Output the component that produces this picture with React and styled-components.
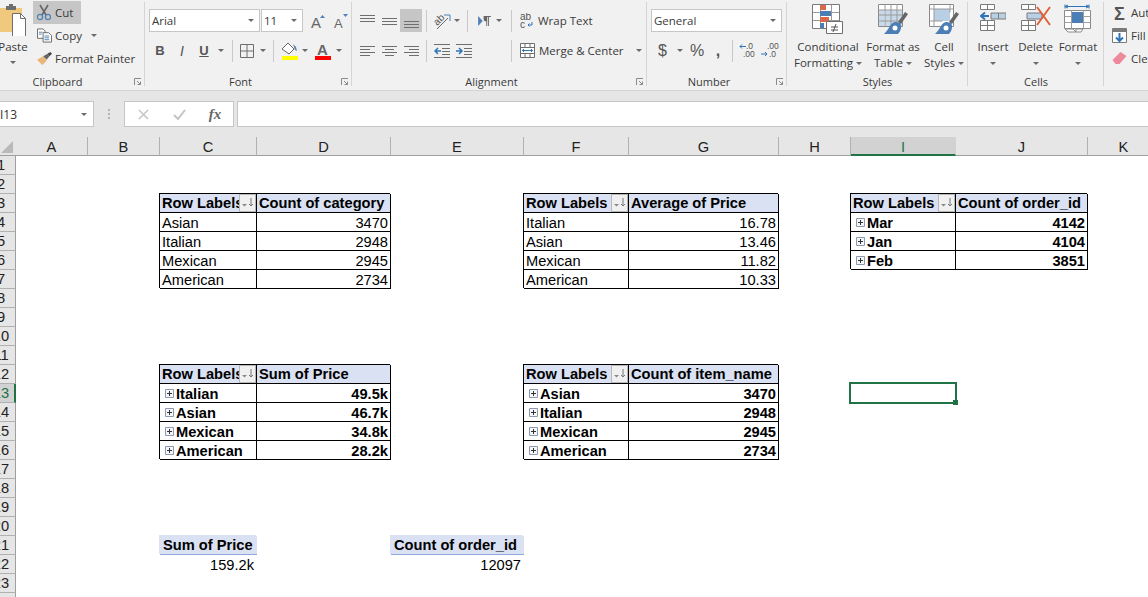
import React from 'react';
import styled, {createGlobalStyle} from 'styled-components';

const GlobalStyle = createGlobalStyle`
  html, body { margin: 0; padding: 0; height: 100%; overflow: hidden; background: #fff; }
  body { font-family: "Open Sans", "Noto Sans", sans-serif; color: #3a3a3a; }
  svg { flex: none; }
`;

const Page = styled.div`
  width: 1148px;
  height: 597px;
  overflow: hidden;
`;

/* ribbon */
const Ribbon = styled.div`
  display: flex;
  height: 90px;
  background: #f1f1f1;
  border-bottom: 1px solid #d4d4d4;
`;

const Group = styled.div`
  position: relative;
  flex: none;
  display: flex;
  flex-direction: column;
  width: ${p => p.$w}px;
  margin-left: ${p => p.$ml || 0}px;
  padding-left: ${p => p.$pl || 0}px;
  box-sizing: border-box;
  &::after {
    content: '';
    position: absolute;
    right: 0;
    top: 2px;
    bottom: 4px;
    width: 1px;
    background: #d5d5d5;
  }
`;

const GroupBody = styled.div`
  height: 72px;
  display: flex;
`;

const GroupLabel = styled.div`
  margin-left: ${p => -(p.$pl || 0)}px;
  padding-right: ${p => (p.$launcher ? 16 : 0)}px;
  height: 18px;
  line-height: 19px;
  font-size: 11px;
  text-align: center;
  color: #3a3a3a;
`;

const LauncherBox = styled.svg`
  position: absolute;
  right: 3px;
  bottom: 4px;
`;

const Launcher = () => (
  <LauncherBox width="8" height="8" viewBox="0 0 8 8" fill="none" stroke="#8a8a8a">
    <path d="M.5 7V.5H7M3 3l3.5 3.500M6.500 3.500v3h-3" />
  </LauncherBox>
);

const Stack = styled.div`
  display: flex;
  flex-direction: column;
  width: ${p => (p.$w ? `${p.$w}px` : 'auto')};
  padding-top: ${p => p.$pt || 0}px;
`;

const Row = styled.div`
  display: flex;
  align-items: center;
  height: ${p => p.$h || 23}px;
  margin-top: ${p => p.$mt || 0}px;
  margin-left: ${p => p.$ml || 0}px;
`;

const Tool = styled.div`
  flex: none;
  width: ${p => p.$w}px;
  height: 23px;
  display: flex;
  align-items: center;
  justify-content: center;
  background: ${p => (p.$on ? '#c6c6c6' : 'transparent')};
`;

const Caret = styled.span`
  flex: none;
  display: inline-block;
  width: 0;
  height: 0;
  margin: ${p => p.$m || '0'};
  border-left: 3.5px solid transparent;
  border-right: 3.5px solid transparent;
  border-top: 3.5px solid #6b6b6b;
`;

const CaretTool = styled.div`
  flex: none;
  width: ${p => p.$w || 12}px;
  display: flex;
  justify-content: center;
`;

const Sep = styled.div`
  flex: none;
  width: 1px;
  height: 22px;
  background: #c9c9c9;
  margin: 0 ${p => p.$r || 4}px 0 ${p => p.$l || 4}px;
`;

const Select = styled.div`
  flex: none;
  box-sizing: border-box;
  width: ${p => p.$w}px;
  height: 23px;
  margin-right: ${p => p.$mr || 0}px;
  background: #fff;
  border: 1px solid #c6c6c6;
  display: flex;
  align-items: center;
  justify-content: space-between;
  padding: 0 5px 0 2px;
  font-size: 11.5px;
`;

const SmallButton = styled.div`
  display: flex;
  align-items: center;
  gap: ${p => p.$gap || 5}px;
  height: ${p => p.$h || 22}px;
  width: ${p => (p.$w ? `${p.$w}px` : 'auto')};
  padding: 0 0 ${p => p.$pb || 0}px 4px;
  box-sizing: border-box;
  background: ${p => (p.$on ? '#c6c6c6' : 'transparent')};
  font-size: 11.5px;
  white-space: nowrap;
`;

const PasteLabel = styled.div`
  font-size: 11.5px;
  text-align: center;
  line-height: 16px;
  margin-top: 3px;
`;

const PasteCaret = styled.div`
  display: flex;
  justify-content: center;
  margin-top: 6px;
`;

const BigButton = styled.div`
  flex: none;
  width: ${p => p.$w}px;
  display: flex;
  flex-direction: column;
  align-items: center;
  padding-top: 4px;
  font-size: 11.5px;
  line-height: 16px;
  text-align: center;
  white-space: nowrap;
`;

const IconSlot = styled.div`
  height: 35px;
  display: flex;
  align-items: flex-start;
  justify-content: center;
`;

const BigText = styled.div`
  display: flex;
  align-items: center;
  justify-content: center;
  gap: 3px;
  height: 16px;
`;

const Letter = styled.span`
  font-family: "Liberation Sans", Arial, sans-serif;
  font-size: ${p => p.$size || 13}px;
  font-weight: ${p => (p.$bold ? 700 : 400)};
  font-style: ${p => (p.$italic ? 'italic' : 'normal')};
  text-decoration: ${p => (p.$under ? 'underline' : 'none')};
  color: #555;
`;

/* formula bar */
const FormulaBand = styled.div`
  display: flex;
  height: 26px;
  padding: 10px 0;
  background: #e6e6e6;
`;

const NameBox = styled.div`
  box-sizing: border-box;
  width: 94px;
  background: #fff;
  border: 1px solid #c6c6c6;
  border-left: 0;
  display: flex;
  align-items: center;
  justify-content: space-between;
  padding-right: 6px;
  font-size: 12px;
  color: #333;
`;

const Dots = styled.div`
  width: 30px;
  display: flex;
  flex-direction: column;
  align-items: center;
  justify-content: center;
  gap: 2px;
  & i { display: block; width: 2px; height: 2px; background: #b4b4b4; }
`;

const FxBox = styled.div`
  box-sizing: border-box;
  width: 110px;
  background: #fff;
  border: 1px solid #c6c6c6;
  display: flex;
  align-items: center;
`;

const FxSlot = styled.div`
  width: 36px;
  display: flex;
  justify-content: center;
  align-items: center;
`;

const FxText = styled.span`
  font-family: "Liberation Serif", serif;
  font-style: italic;
  font-weight: 700;
  font-size: 15px;
  color: #666;
`;

const FormulaInput = styled.div`
  flex: 1;
  margin-left: 3px;
  background: #fff;
  border: 1px solid #c6c6c6;
  border-right: 0;
`;

/* sheet */
const Sheet = styled.div`
  display: grid;
  grid-template-columns: 16px 72px 72px 97px 134px 133px 105px 150px 72px 105px 132px 72px;
  grid-template-rows: repeat(25, 19px);
  background: #fff;
  font-family: "Liberation Sans", Arial, sans-serif;
  font-size: 14.67px;
  color: #000;
`;

const Corner = styled.div`
  grid-column: 1;
  grid-row: 1;
  background: #e6e6e6;
  border-bottom: 1px solid #9f9f9f;
  position: relative;
  &::after {
    content: '';
    position: absolute;
    right: 3px;
    bottom: 2px;
    border-left: 12px solid transparent;
    border-bottom: 12px solid #b9b9b9;
  }
`;

const ColHead = styled.div`
  grid-row: 1;
  box-sizing: border-box;
  background: ${p => (p.$active ? '#d2d2d2' : '#e6e6e6')};
  color: ${p => (p.$active ? '#217346' : '#222')};
  border-right: 1px solid ${p => (p.$active ? '#d2d2d2' : '#b1b1b1')};
  border-bottom: ${p => (p.$active ? '2px solid #217346' : '1px solid #9f9f9f')};
  text-align: center;
  line-height: 20px;
`;

const RowHead = styled.div`
  grid-column: 1;
  box-sizing: border-box;
  overflow: hidden;
  background: ${p => (p.$active ? '#d2d2d2' : '#e6e6e6')};
  color: ${p => (p.$active ? '#217346' : '#222')};
  border-bottom: 1px solid #b1b1b1;
  border-right: ${p => (p.$active ? '2px solid #217346' : '1px solid #9f9f9f')};
  line-height: 18px;
`;

const RowNumber = styled.span`
  display: block;
  width: 34px;
  margin-left: -16px;
  text-align: center;
`;

const Cell = styled.div`
  box-sizing: border-box;
  grid-column: ${p => p.$col};
  grid-row: ${p => p.$row};
  overflow: hidden;
  white-space: nowrap;
  display: flex;
  align-items: center;
  justify-content: ${p => (p.$right ? 'flex-end' : 'flex-start')};
  padding: ${p => (p.$head ? 0 : 1)}px 2px 0 ${p => (p.$indent ? 5 : 2)}px;
  font-weight: ${p => (p.$bold ? 700 : 400)};
  background: ${p => (p.$head ? '#d9e1f2' : '#fff')};
  border-right: 1px solid #000;
  border-bottom: 1px solid #000;
  box-shadow: -1px -1px 0 0 #000;
  line-height: 18px;
`;

const HeadLabel = styled.span`
  flex: 1;
  min-width: 0;
  overflow: hidden;
`;

const FilterButton = styled.span`
  flex: none;
  box-sizing: border-box;
  width: 17px;
  height: 18px;
  margin-right: -2px;
  background: #f0f0f0;
  border: 1px solid #b8b8b8;
  display: flex;
  align-items: center;
  justify-content: center;
`;

const PlusBox = styled.svg`
  flex: none;
  margin-right: 2px;
`;

const PlainHead = styled.div`
  grid-column: ${p => p.$col};
  grid-row: ${p => p.$row};
  box-sizing: border-box;
  background: #d9e1f2;
  border-bottom: 1px solid #8ea9db;
  box-shadow: -1px -1px 0 0 #d9e1f2;
  font-weight: 700;
  padding-left: 3px;
  line-height: 18px;
  white-space: nowrap;
`;

const PlainValue = styled.div`
  grid-column: ${p => p.$col};
  grid-row: ${p => p.$row};
  text-align: right;
  padding: 1px 3px 0 0;
  line-height: 18px;
`;

const Selected = styled.div`
  grid-column: ${p => p.$col};
  grid-row: ${p => p.$row};
  position: relative;
  &::before {
    content: '';
    position: absolute;
    left: -2px;
    top: -2px;
    right: -1px;
    bottom: -1px;
    border: 2px solid #217346;
  }
  &::after {
    content: '';
    position: absolute;
    right: -2px;
    bottom: -2px;
    width: 5px;
    height: 5px;
    background: #217346;
  }
`;

/* icons */
const PasteIcon = () => (
  <svg width="30" height="32" viewBox="0 0 30 32">
    <path d="M0 4h24v24H0z" fill="#f0c97e" />
    <path d="M8 2h3V0h4v2h3v4H8z" fill="#6e6e6e" />
    <path d="M14.500 9.500h8l5 5v18h-13z" fill="#fff" stroke="#6e6e6e" />
    <path d="M22.500 9.500v5h5" fill="none" stroke="#6e6e6e" />
  </svg>
);

const ScissorsIcon = () => (
  <svg width="14" height="17" viewBox="0 0 14 17" fill="none">
    <path d="M3 1l6 10M11 1L5 11" stroke="#666" strokeWidth="1.600" />
    <circle cx="3" cy="13" r="2.600" stroke="#4f81b5" strokeWidth="1.300" />
    <circle cx="11" cy="13" r="2.600" stroke="#4f81b5" strokeWidth="1.300" />
  </svg>
);

const CopyIcon = () => (
  <svg width="15" height="15" viewBox="0 0 16 15" fill="#fff" stroke="#666">
    <path d="M.5.500h6l2 2v8h-8z" />
    <path d="M6.500 4.500h6l3 3v7h-9z" />
    <path d="M2 4h4M2 6h3M8 8h5M8 10h5M8 12h5" stroke="#4f81b5" fill="none" />
  </svg>
);

const PainterIcon = () => (
  <svg width="15" height="15" viewBox="0 0 17 15">
    <path d="M0 9l7-4 4 5-5 5z" fill="#eab676" />
    <path d="M7 5l5-3 2 3-3 4z" fill="#666" />
    <path d="M12 2l3-2 2 2-3 3z" fill="#444" />
  </svg>
);

const GrowA = ({up}) => (
  <svg width="17" height="16" viewBox="0 0 17 16">
    <path d={up ? 'M10 5l2.500-3 2.500 3z' : 'M10 1h5l-2.500 3z'} fill="#4f81b5" />
    <text x="1" y="15" fontFamily="Liberation Sans" fontSize={up ? 15 : 13} fill="#666">A</text>
  </svg>
);

const BordersIcon = () => (
  <svg width="14" height="14" viewBox="0 0 14 14" fill="none" stroke="#6e6e6e">
    <path d="M.5.500h13v13H.5zM7 .500v13M.5 7h13" />
  </svg>
);

const FillIcon = () => (
  <svg width="17" height="18" viewBox="0 0 17 18">
    <path d="M1 7l6-6 6 6-5 5z" fill="#fff" stroke="#666" />
    <path d="M12 2l3 3 1 4-2-1z" fill="#4f81b5" />
    <path d="M1 14h16v4H1z" fill="#ffff00" />
  </svg>
);

const FontColorIcon = () => (
  <svg width="17" height="18" viewBox="0 0 17 18">
    <text x="8.500" y="13" textAnchor="middle" fontFamily="Liberation Sans" fontWeight="700" fontSize="15" fill="#666">A</text>
    <path d="M1 14h16v4H1z" fill="#ff0000" />
  </svg>
);

const Lines = ({rows, w = 15, h = 14}) => (
  <svg width={w} height={h} viewBox={`0 0 ${w} ${h}`} stroke="#6e6e6e" fill="none">
    {rows.map(([a, b, y]) => <path key={y} d={`M${a} ${y}.5H${b}`} />)}
  </svg>
);

const OrientIcon = () => (
  <svg width="20" height="18" viewBox="0 0 20 18" fill="none">
    <text x="2" y="12" transform="rotate(-45 6 9)" fontFamily="Liberation Sans" fontSize="10" fill="#555">ab</text>
    <path d="M5 17L16 6" stroke="#666" />
    <path d="M12 3h6v6" stroke="#4f81b5" />
  </svg>
);

const DirIcon = () => (
  <svg width="13" height="10" viewBox="0 0 14 11">
    <path d="M0 0l5 5.500L0 11z" fill="#4f81b5" />
    <path d="M6 0h8v1h-2v10h-1V1h-1v10H9V6a3 3 0 0 1-3-3z" fill="#666" />
  </svg>
);

const IndentIcon = ({flip}) => (
  <svg width="16" height="14" viewBox="0 0 16 14" fill="none">
    <path d={flip ? 'M0 7h5M3 4l3 3-3 3' : 'M7 7H1M4 4L1 7l3 3'} stroke="#2f75b5" strokeWidth="1.500" />
    <path d="M0 .500h16M8 4.500h8M8 7.500h8M8 10.500h8M0 13.500h16" stroke="#6e6e6e" />
  </svg>
);

const WrapIcon = () => (
  <svg width="14" height="16" viewBox="0 0 14 16">
    <text x="0" y="7" fontFamily="Liberation Sans" fontSize="10" fill="#555">ab</text>
    <text x="0" y="15" fontFamily="Liberation Sans" fontSize="10" fill="#555">c</text>
    <path d="M12 9v3H8M9.500 10.500L8 12l1.500 1.500" fill="none" stroke="#2f75b5" />
  </svg>
);

const MergeIcon = () => (
  <svg width="15" height="15" viewBox="0 0 15 15" fill="#fff" stroke="#6e6e6e">
    <path d="M.5.500h14v14H.5z" />
    <path d="M.5 4.500h14M.5 10.500h14M5 .500v4M10 .500v4M5 10.500v4M10 10.500v4" fill="none" />
    <path d="M2 7.500h11M4 6L2.500 7.500 4 9M11 6l1.500 1.500L11 9" stroke="#2f75b5" fill="none" />
  </svg>
);

const DecimalIcon = ({more}) => (
  <svg width="18" height="15" viewBox="0 0 18 15">
    <text x={more ? 7 : 6} y="6" fontFamily="Liberation Sans" fontSize="8.500" fill="#555">{more ? '.0' : '.00'}</text>
    <text x={more ? 4 : 8} y="14" fontFamily="Liberation Sans" fontSize="8.500" fill="#555">{more ? '.00' : '.0'}</text>
    <path d={more ? 'M7 3.500H1M3 1.500l-2 2 2 2' : 'M0 11h6M4 9l2 2-2 2'} fill="none" stroke="#2f75b5" />
  </svg>
);

const CondIcon = () => (
  <svg width="32" height="32" viewBox="0 0 32 32">
    <path d="M.5.500h27v24H.5z" fill="#fff" stroke="#7a7a7a" />
    <path d="M8.500 1v24M19.500 1v24M1 8.500h26M1 16.500h26" stroke="#9a9a9a" fill="none" />
    <path d="M8 1h6v5H8z" fill="#d9694a" />
    <path d="M8 7h11v5H8z" fill="#4a7eb5" />
    <path d="M8 13h9v5H8z" fill="#d9694a" />
    <path d="M8 19h4v5H8z" fill="#4a7eb5" />
    <path d="M14.500 17.500h16v12h-16z" fill="#fff" stroke="#6e6e6e" />
    <path d="M19 23h7M19 26h7M24 20l-3 8" stroke="#555" fill="none" />
  </svg>
);

const TableBrushIcon = ({cell}) => (
  <svg width="30" height="32" viewBox="0 0 30 32">
    <path d="M.5.500h24v22H.5z" fill="#fff" stroke="#8a8a8a" />
    {cell
      ? <path d="M5 5h16v12H5z" fill="#b8cfe6" />
      : <path d="M7 6h17v16H7zM1 6h5v16H1z" fill="#c8d9eb" />}
    <path d={cell ? 'M5 .500v22M21 .500v8M.5 5h24M.5 17h13' : 'M7 .500v22M13 .500v22M19 .500v22M.5 6h24M.5 11h24M.5 17h24'} stroke="#9a9a9a" fill="none" />
    <path d="M20 18l7-10 3 2-7 10z" fill="#666" />
    <path d="M18 18c-6 0-7 8-12 12h14c3-3 4-8 2-11z" fill="#4a7eb5" />
    <circle cx="17" cy="24" r="2.500" fill="#fff" />
  </svg>
);

const InsertIcon = () => (
  <svg width="26" height="28" viewBox="0 0 26 28">
    <path d="M.5.500h14v5H.5zM7.500.500v5M.5 16.500h14v10H.5zM.5 21.500h14M7.500 16.500v10" fill="#fff" stroke="#7a7a7a" />
    <path d="M11 9h15v6H11z" fill="#b8cfe6" stroke="#7a7a7a" />
    <path d="M18.500 9v6" stroke="#7a7a7a" />
    <path d="M1 12h8M5 8.500L1 12l4 3.500" fill="none" stroke="#2f75b5" strokeWidth="2" />
  </svg>
);

const DeleteIcon = () => (
  <svg width="30" height="28" viewBox="0 0 30 28">
    <path d="M.5.500h14v5H.5zM7.500.500v5M.5 16.500h14v10H.5zM.5 21.500h14M7.500 16.500v10" fill="#fff" stroke="#7a7a7a" />
    <path d="M6 9h15v6H6z" fill="#b8cfe6" stroke="#7a7a7a" />
    <path d="M16 3l13 18M29 3L16 21" stroke="#e0623c" strokeWidth="2" fill="none" />
  </svg>
);

const FormatIcon = () => (
  <svg width="28" height="30" viewBox="0 0 28 30">
    <path d="M1 2.500h24M1 .500v4M25 .500v4M4 1L1 2.500 4 4M22 1l3 1.500L22 4" stroke="#2f75b5" fill="none" />
    <path d="M.5 6.500h26v18H.5z" fill="#fff" stroke="#8a8a8a" />
    <path d="M7.500 6.500v18M19.500 6.500v18M.5 12.500h26M.5 18.500h26" stroke="#a0a0a0" fill="none" />
    <path d="M8 8h11v11H8z" fill="#4a7eb5" />
    <path d="M1 25h8l3 3h-8zM12 25h7l-2 3h-5z" fill="#fff" stroke="#8a8a8a" />
  </svg>
);

const SigmaIcon = () => (
  <svg width="15" height="15" viewBox="0 0 15 15">
    <text x="7.500" y="14.500" textAnchor="middle" fontFamily="Liberation Sans" fontWeight="700" fontSize="18" fill="#555">Σ</text>
  </svg>
);

const FillDownIcon = () => (
  <svg width="15" height="15" viewBox="0 0 15 15">
    <path d="M.5.500h14v14H.5z" fill="#fff" stroke="#7a7a7a" />
    <path d="M1 1h13v3H1z" fill="#7a7a7a" />
    <path d="M7.500 5v8M4 9.500l3.500 3.500L11 9.500" fill="none" stroke="#2f75b5" strokeWidth="2" />
  </svg>
);

const EraserIcon = () => (
  <svg width="15" height="13" viewBox="0 0 14 13"><path d="M0 8l8-8 6 4-7 8H3z" fill="#ec8a9b" /></svg>
);

const CrossIcon = () => (
  <svg width="11" height="11" viewBox="0 0 11 11"><path d="M1 1l9 9M10 1l-9 9" stroke="#c4c4c4" strokeWidth="1.500" /></svg>
);

const CheckIcon = () => (
  <svg width="13" height="11" viewBox="0 0 13 11"><path d="M1 6l4 4 7-9" fill="none" stroke="#c4c4c4" strokeWidth="2" /></svg>
);

const FilterGlyph = () => (
  <svg width="12" height="10" viewBox="0 0 12 10" fill="none">
    <path d="M0 6h5l-2.500 2.500z" fill="#888" />
    <path d="M9 0v8M7 6l2 2 2-2" stroke="#777" />
  </svg>
);

const Plus = () => (
  <PlusBox width="9" height="9" viewBox="0 0 9 9" fill="none">
    <path d="M.5.500h8v8h-8z" stroke="#8d99ae" fill="#f4f6fa" />
    <path d="M2 4.500h5M4.500 2v5" stroke="#333" />
  </PlusBox>
);

/* data */
const columns = ['A', 'B', 'C', 'D', 'E', 'F', 'G', 'H', 'I', 'J', 'K'];
const colIndex = letter => columns.indexOf(letter) + 2;
const rowIndex = n => n + 1;

const pivots = [
  {left: 'C', right: 'D', row: 3, title: 'Row Labels', head: 'Count of category', rows: [['Asian', '3470'], ['Italian', '2948'], ['Mexican', '2945'], ['American', '2734']]},
  {left: 'F', right: 'G', row: 3, title: 'Row Labels', head: 'Average of Price', rows: [['Italian', '16.78'], ['Asian', '13.46'], ['Mexican', '11.82'], ['American', '10.33']]},
  {left: 'I', right: 'J', row: 3, title: 'Row Labels', head: 'Count of order_id', bold: true, rows: [['Mar', '4142'], ['Jan', '4104'], ['Feb', '3851']]},
  {left: 'C', right: 'D', row: 12, title: 'Row Labels', head: 'Sum of Price', bold: true, rows: [['Italian', '49.5k'], ['Asian', '46.7k'], ['Mexican', '34.8k'], ['American', '28.2k']]},
  {left: 'F', right: 'G', row: 12, title: 'Row Labels', head: 'Count of item_name', bold: true, rows: [['Asian', '3470'], ['Italian', '2948'], ['Mexican', '2945'], ['American', '2734']]},
];

function Pivot({left, right, row, title, head, rows, bold}) {
  const l = colIndex(left);
  const r = colIndex(right);
  const top = rowIndex(row);
  return (
    <>
      <Cell $col={l} $row={top} $head $bold>
        <HeadLabel>{title}</HeadLabel>
        <FilterButton><FilterGlyph /></FilterButton>
      </Cell>
      <Cell $col={r} $row={top} $head $bold>{head}</Cell>
      {rows.map(([label, value], i) => (
        <React.Fragment key={label}>
          <Cell $col={l} $row={top + i + 1} $bold={bold} $indent={bold}>
            {bold && <Plus />}{label}
          </Cell>
          <Cell $col={r} $row={top + i + 1} $bold={bold} $right>{value}</Cell>
        </React.Fragment>
      ))}
    </>
  );
}

export default function App() {
  return (
    <Page>
      <GlobalStyle />
      <Ribbon>
        <Group $w={159} $ml={-14} $pl={12}>
          <GroupBody>
            <Stack $w={30}>
              <Row $h={4} />
              <PasteIcon />
              <PasteLabel>Paste</PasteLabel>
              <PasteCaret><Caret /></PasteCaret>
            </Stack>
            <Stack $pt={1}>
              <Row $ml={5} $h={23}>
                <SmallButton $on $w={48} $h={23} $gap={4} $pb={1}><ScissorsIcon />Cut</SmallButton>
              </Row>
              <Row $ml={5} $h={23}>
                <SmallButton $gap={3} $pb={1}><CopyIcon />Copy<Caret $m="0 0 0 6px" /></SmallButton>
              </Row>
              <Row $ml={5} $h={23}>
                <SmallButton $gap={3} $pb={1}><PainterIcon />Format Painter</SmallButton>
              </Row>
            </Stack>
          </GroupBody>
          <GroupLabel $launcher $pl={12}>Clipboard</GroupLabel>
          <Launcher />
        </Group>

        <Group $w={207} $pl={4}>
          <GroupBody>
            <Stack>
              <Row $mt={9}>
                <Select $w={111} $mr={1}>Arial<Caret /></Select>
                <Select $w={42} $mr={6}>11<Caret /></Select>
                <Tool $w={18}><GrowA up /></Tool>
                <Tool $w={5} />
                <Tool $w={18}><GrowA /></Tool>
              </Row>
              <Row $mt={7}>
                <Tool $w={22}><Letter $bold>B</Letter></Tool>
                <Tool $w={22}><Letter $italic $size={14}>I</Letter></Tool>
                <Tool $w={22}><Letter $under $bold>U</Letter></Tool>
                <CaretTool><Caret /></CaretTool>
                <Sep $l={5} />
                <Tool $w={20}><BordersIcon /></Tool>
                <CaretTool><Caret /></CaretTool>
                <Sep />
                <Tool $w={22}><FillIcon /></Tool>
                <CaretTool $w={10}><Caret /></CaretTool>
                <Tool $w={24}><FontColorIcon /></Tool>
                <CaretTool $w={10}><Caret /></CaretTool>
              </Row>
            </Stack>
          </GroupBody>
          <GroupLabel $launcher $pl={4}>Font</GroupLabel>
          <Launcher />
        </Group>

        <Group $w={295} $pl={4}>
          <GroupBody>
            <Stack>
              <Row $mt={9}>
                <Tool $w={22}><Lines rows={[[0, 15, 1], [0, 15, 4], [0, 15, 7]]} /></Tool>
                <Tool $w={22}><Lines rows={[[0, 15, 4], [0, 15, 7], [0, 15, 10]]} /></Tool>
                <Tool $w={22} $on><Lines rows={[[0, 15, 7], [0, 15, 10], [0, 15, 13]]} /></Tool>
                <Sep />
                <Tool $w={22}><OrientIcon /></Tool>
                <CaretTool $w={8}><Caret /></CaretTool>
                <Sep $l={6} $r={6} />
                <Tool $w={20}><DirIcon /></Tool>
                <CaretTool $w={10}><Caret /></CaretTool>
                <Sep $l={7} />
                <SmallButton $h={23} $gap={4}><WrapIcon />Wrap Text</SmallButton>
              </Row>
              <Row $mt={7}>
                <Tool $w={22}><Lines rows={[[0, 15, 2], [0, 10, 5], [0, 15, 8], [0, 10, 11]]} /></Tool>
                <Tool $w={22}><Lines rows={[[0, 15, 2], [3, 12, 5], [0, 15, 8], [3, 12, 11]]} /></Tool>
                <Tool $w={22}><Lines rows={[[0, 15, 2], [5, 15, 5], [0, 15, 8], [5, 15, 11]]} /></Tool>
                <Sep />
                <Tool $w={22}><IndentIcon /></Tool>
                <Tool $w={22}><IndentIcon flip /></Tool>
                <Sep $l={36} />
                <SmallButton $h={23} $gap={4}><MergeIcon />Merge &amp; Center<Caret $m="0 0 0 8px" /></SmallButton>
              </Row>
            </Stack>
          </GroupBody>
          <GroupLabel $launcher $pl={4}>Alignment</GroupLabel>
          <Launcher />
        </Group>

        <Group $w={140} $pl={4}>
          <GroupBody>
            <Stack>
              <Row $mt={9}>
                <Select $w={131}>General<Caret /></Select>
              </Row>
              <Row $mt={7}>
                <Tool $w={23}><Letter $size={16}>$</Letter></Tool>
                <CaretTool $w={12}><Caret /></CaretTool>
                <Tool $w={22}><Letter $size={16}>%</Letter></Tool>
                <Tool $w={20}><Letter $size={16} $bold>,</Letter></Tool>
                <Sep $l={4} $r={4} />
                <Tool $w={22}><DecimalIcon more /></Tool>
                <Tool $w={22}><DecimalIcon /></Tool>
              </Row>
            </Stack>
          </GroupBody>
          <GroupLabel $launcher $pl={4}>Number</GroupLabel>
          <Launcher />
        </Group>

        <Group $w={181} $pl={6}>
          <GroupBody>
            <BigButton $w={70}>
              <IconSlot><CondIcon /></IconSlot>
              <BigText>Conditional</BigText>
              <BigText>Formatting<Caret /></BigText>
            </BigButton>
            <BigButton $w={60}>
              <IconSlot><TableBrushIcon /></IconSlot>
              <BigText>Format as</BigText>
              <BigText>Table<Caret /></BigText>
            </BigButton>
            <BigButton $w={42}>
              <IconSlot><TableBrushIcon cell /></IconSlot>
              <BigText>Cell</BigText>
              <BigText>Styles<Caret /></BigText>
            </BigButton>
          </GroupBody>
          <GroupLabel $pl={6}>Styles</GroupLabel>
        </Group>

        <Group $w={136} $pl={4}>
          <GroupBody>
            <BigButton $w={42}>
              <IconSlot><InsertIcon /></IconSlot>
              <BigText>Insert</BigText>
              <BigText><Caret /></BigText>
            </BigButton>
            <BigButton $w={43}>
              <IconSlot><DeleteIcon /></IconSlot>
              <BigText>Delete</BigText>
              <BigText><Caret /></BigText>
            </BigButton>
            <BigButton $w={42}>
              <IconSlot><FormatIcon /></IconSlot>
              <BigText>Format</BigText>
              <BigText><Caret /></BigText>
            </BigButton>
          </GroupBody>
          <GroupLabel $pl={4}>Cells</GroupLabel>
        </Group>

        <Group $w={90} $pl={4}>
          <Stack $pt={1}>
            <SmallButton $h={23} $gap={4}><SigmaIcon />AutoSum</SmallButton>
            <SmallButton $h={23} $gap={4}><FillDownIcon />Fill</SmallButton>
            <SmallButton $h={23} $gap={4}><EraserIcon />Clear</SmallButton>
          </Stack>
        </Group>
      </Ribbon>

      <FormulaBand>
        <NameBox><span>I13</span><Caret /></NameBox>
        <Dots><i /><i /><i /></Dots>
        <FxBox>
          <FxSlot><CrossIcon /></FxSlot>
          <FxSlot><CheckIcon /></FxSlot>
          <FxSlot><FxText>fx</FxText></FxSlot>
        </FxBox>
        <FormulaInput />
      </FormulaBand>

      <Sheet>
        <Corner />
        {columns.map(c => (
          <ColHead key={c} $active={c === 'I'}>{c}</ColHead>
        ))}
        {Array.from({length: 24}, (_, i) => (
          <RowHead key={i} $active={i === 12}><RowNumber>{i + 1}</RowNumber></RowHead>
        ))}
        {pivots.map(p => <Pivot key={p.head} {...p} />)}
        <PlainHead $col={colIndex('C')} $row={rowIndex(21)}>Sum of Price</PlainHead>
        <PlainValue $col={colIndex('C')} $row={rowIndex(22)}>159.2k</PlainValue>
        <PlainHead $col={colIndex('E')} $row={rowIndex(21)}>Count of order_id</PlainHead>
        <PlainValue $col={colIndex('E')} $row={rowIndex(22)}>12097</PlainValue>
        <Selected $col={colIndex('I')} $row={rowIndex(13)} />
      </Sheet>
    </Page>
  );
}
